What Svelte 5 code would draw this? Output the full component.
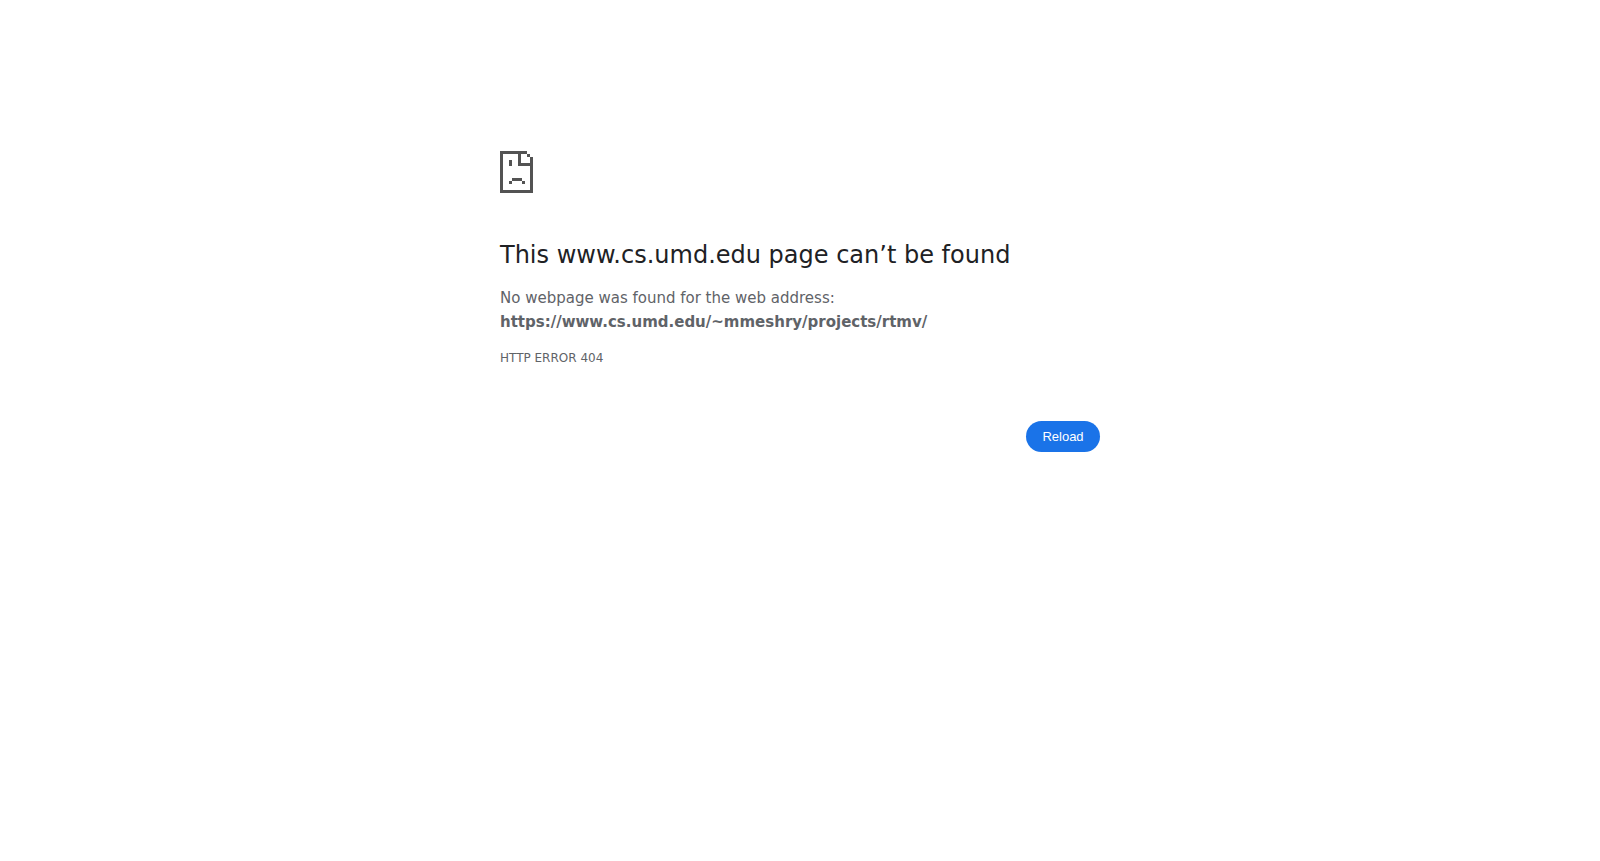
<script>
  const address = 'https://www.cs.umd.edu/~mmeshry/projects/rtmv/';
  function reload() {
    window.location.reload();
  }
</script>

<svelte:head>
  <title>www.cs.umd.edu</title>
</svelte:head>

<main class="wrapper">
  <svg class="icon" viewBox="0 0 72 72" shape-rendering="crispEdges" aria-hidden="true">
    <path d="M0 0H27V3H3V39H30V15H18V3H21V12H30V6H33V42H0z" />
    <path d="M27 3h3v3h-3zM9 9h3v6H9zM12 27h10v3H12zM9 30h3v3H9zM22 30h3v3h-3z" />
  </svg>
  <h1>This www.cs.umd.edu page can’t be found</h1>
  <p>No webpage was found for the web address: <strong>{address}</strong></p>
  <div class="code">HTTP ERROR 404</div>
  <div class="actions">
    <button type="button" onclick={reload}>Reload</button>
  </div>
</main>

<style>
  :global(body) {
    margin: 0;
    background: #fff;
  }
  .wrapper {
    box-sizing: border-box;
    max-width: 600px;
    margin: 0 auto;
    padding-top: 151px;
    color: #5f6368;
    font-family: "DejaVu Sans", sans-serif;
    font-size: 15px;
    line-height: 24px;
  }
  .icon {
    display: block;
    width: 72px;
    height: 72px;
    fill: #535353;
  }
  h1 {
    margin: 17px 0 16px;
    color: #202124;
    font-size: 24px;
    font-weight: 500;
    line-height: 30px;
  }
  p {
    margin: 0;
  }
  strong {
    display: block;
  }
  .code {
    margin-top: 12px;
    font-size: 12px;
  }
  .actions {
    display: flex;
    justify-content: flex-end;
    margin-top: 51px;
  }
  button {
    min-width: 74px;
    padding: 8px 16px;
    border: 0;
    border-radius: 20px;
    background: #1a73e8;
    color: #fff;
    font-family: "Liberation Sans", Arial, sans-serif;
    font-size: 13px;
    line-height: 15px;
    cursor: pointer;
  }
</style>
